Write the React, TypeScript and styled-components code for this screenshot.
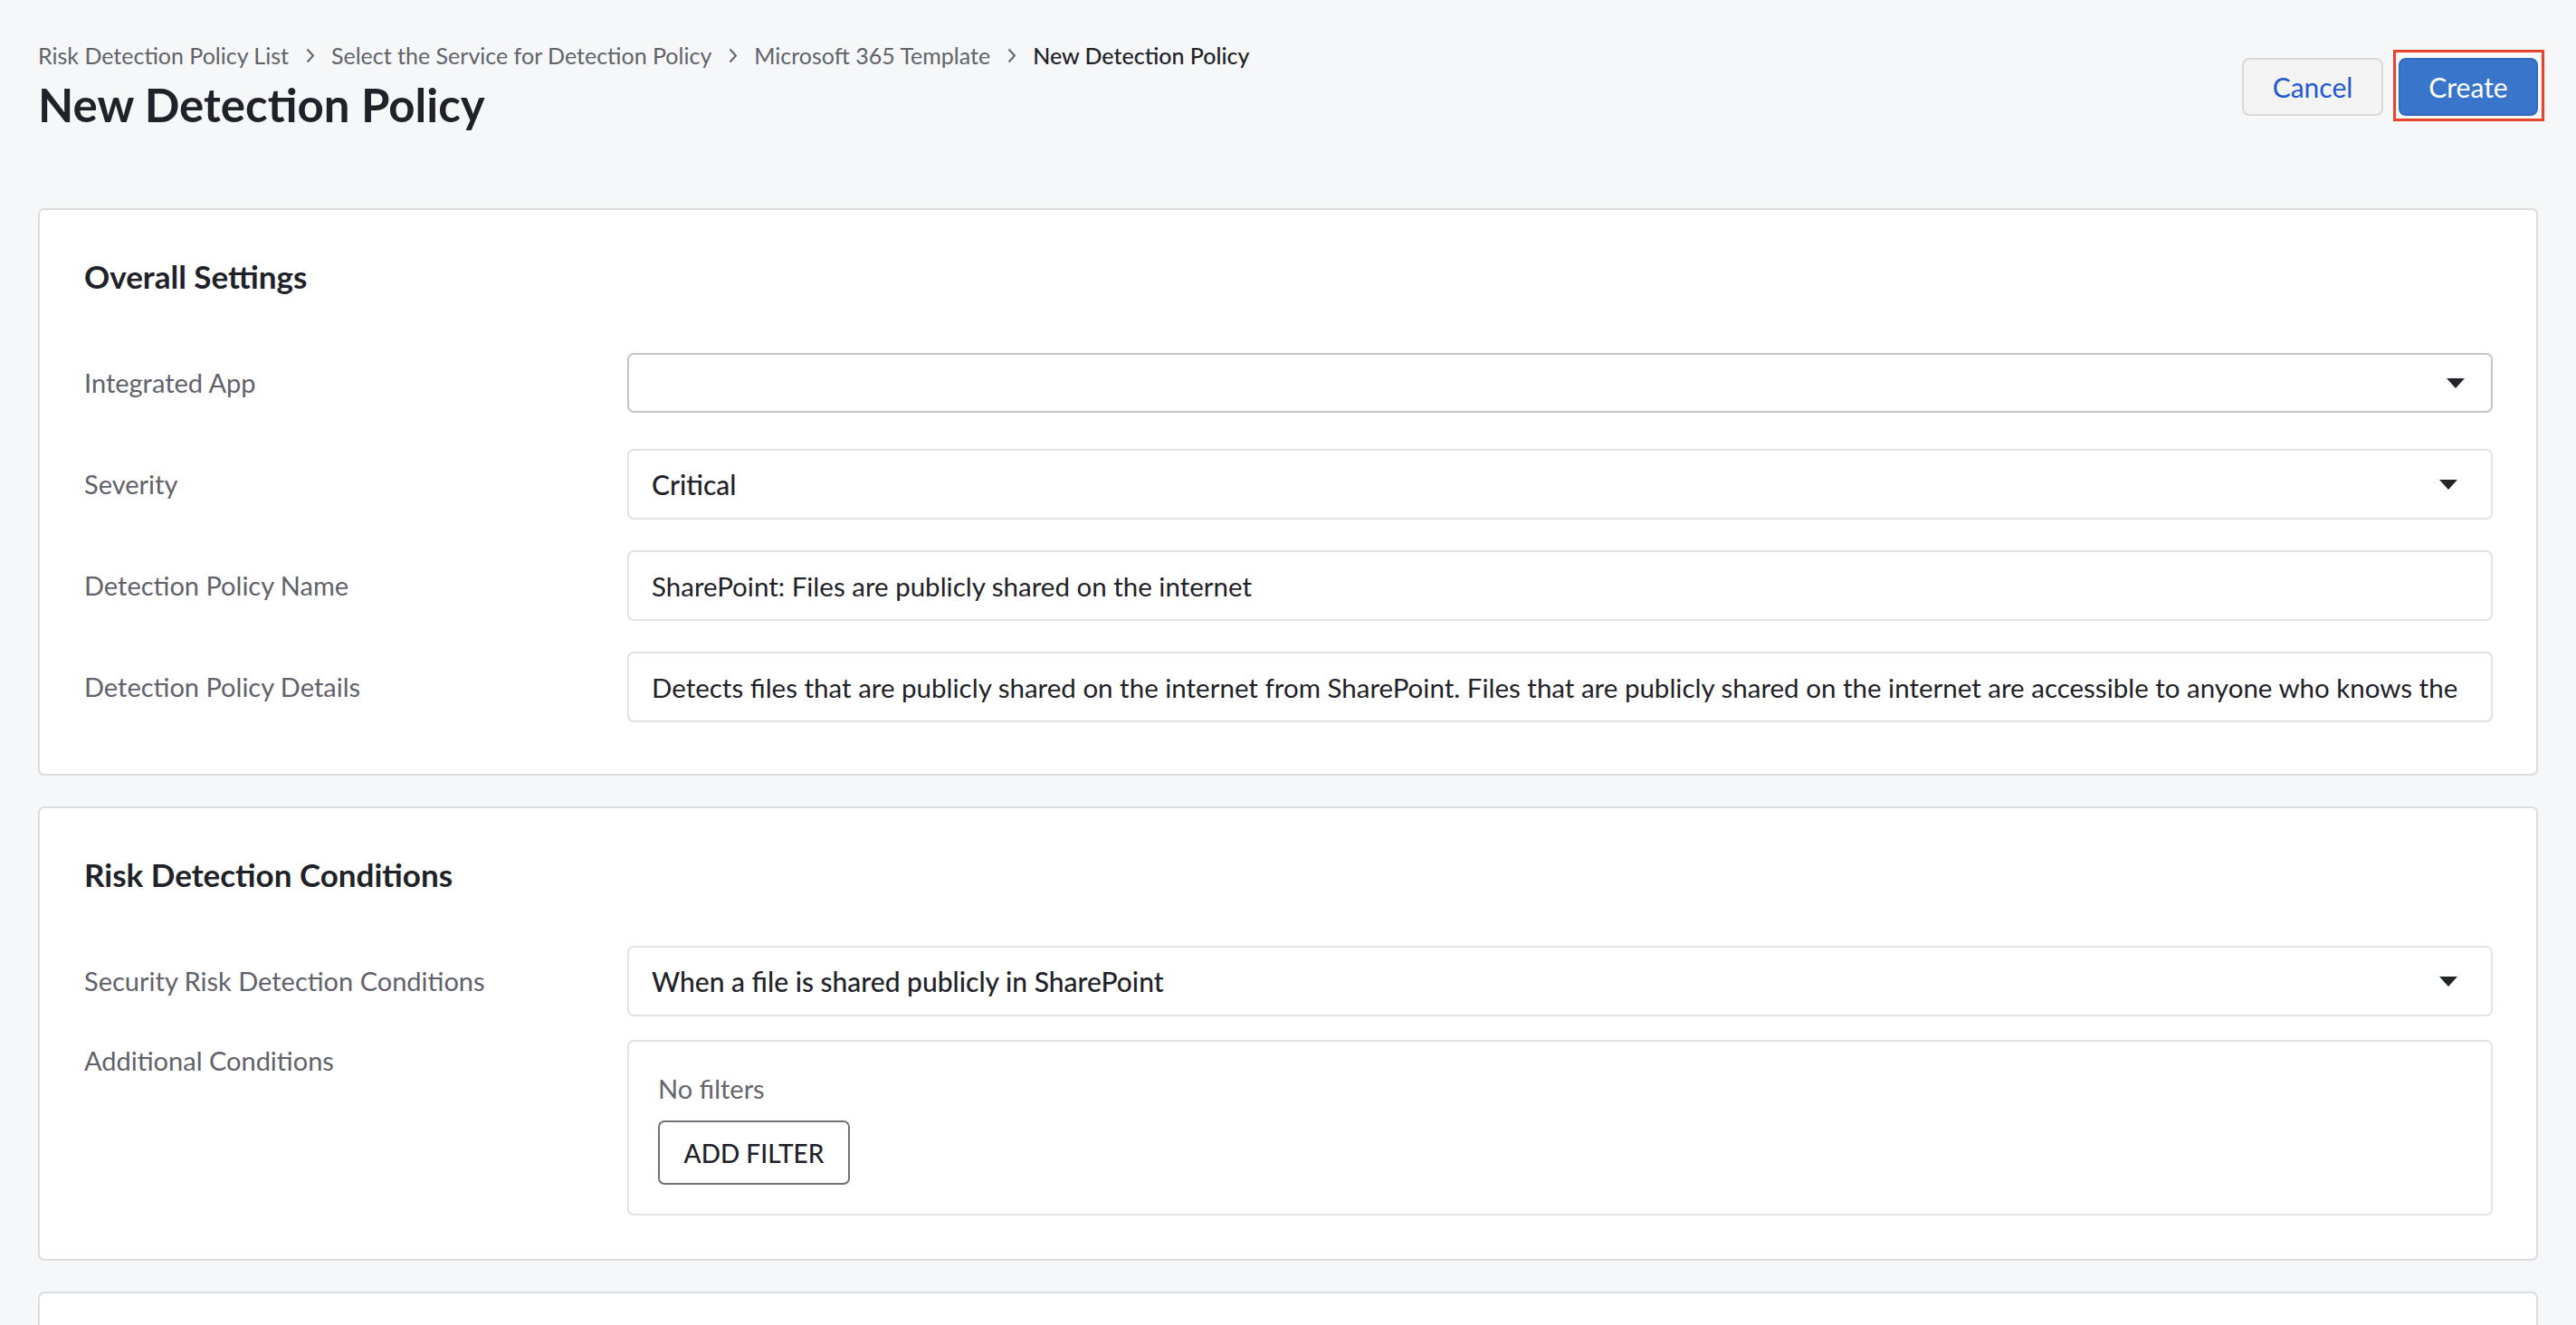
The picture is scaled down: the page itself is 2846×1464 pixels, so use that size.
import React from 'react';
import styled, { createGlobalStyle } from 'styled-components';

const GlobalStyle = createGlobalStyle`
  html, body { margin: 0; padding: 0; background: #f6f7f9; }
  body { font-family: Lato, "Noto Sans", sans-serif; color: #1f2329; }
  * { box-sizing: border-box; }
`;

const Page = styled.div`
  padding: 46px 42px 0 42px;
  min-height: 1464px;
`;

const Header = styled.header`
  display: flex;
  justify-content: space-between;
  align-items: flex-start;
  margin-bottom: 84px;
`;

const TitleBlock = styled.div`
  display: flex;
  flex-direction: column;
`;

const Breadcrumbs = styled.nav`
  display: flex;
  align-items: center;
  gap: 18px;
  font-size: 25px;
  line-height: 30px;
  color: #5f636a;
`;

const Crumb = styled.span<{ $current?: boolean }>`
  color: ${(p) => (p.$current ? '#1f2329' : '#5f636a')};
  font-weight: ${(p) => (p.$current ? 500 : 400)};
`;

const Title = styled.h1`
  margin: 10px 0 0 0;
  font-size: 51px;
  line-height: 60px;
  font-weight: 700;
  color: #1f2329;
`;

const Actions = styled.div`
  display: flex;
  gap: 17px;
  margin-top: 18px;
`;

const Button = styled.button<{ $primary?: boolean }>`
  position: relative;
  height: 64px;
  width: ${(p) => (p.$primary ? '154px' : '156px')};
  border-radius: 8px;
  font-family: Lato, "Noto Sans", sans-serif;
  font-size: 30px;
  cursor: pointer;
  border: 2px solid ${(p) => (p.$primary ? '#3069bd' : '#d8d9db')};
  background: ${(p) => (p.$primary ? '#3a75cc' : '#f3f3f4')};
  color: ${(p) => (p.$primary ? '#ffffff' : '#2458d3')};
`;

const Highlight = styled.span`
  position: absolute;
  top: -11px;
  bottom: -8px;
  left: -8px;
  right: -9px;
  border: 3px solid #e6432a;
  pointer-events: none;
`;

const Card = styled.section<{ $pad: string; $height?: string }>`
  background: #ffffff;
  border: 2px solid #d9dce1;
  border-radius: 7px;
  padding: ${(p) => p.$pad};
  margin-bottom: 34px;
  ${(p) => (p.$height ? `height: ${p.$height};` : '')}
`;

const CardTitle = styled.h2`
  margin: 0 0 58px 0;
  font-size: 35px;
  line-height: 41px;
  font-weight: 700;
  color: #1f2329;
`;

const FieldGrid = styled.div<{ $gap: number }>`
  display: grid;
  grid-template-columns: 600px 1fr;
  row-gap: ${(p) => p.$gap}px;
`;

const Label = styled.div<{ $top?: boolean }>`
  display: flex;
  align-items: ${(p) => (p.$top ? 'flex-start' : 'center')};
  padding-top: ${(p) => (p.$top ? '6px' : '0')};
  font-size: 29px;
  line-height: 34px;
  color: #5f626a;
`;

const Control = styled.div`
  display: flex;
  align-items: center;
  min-height: 78px;
`;

const SelectBox = styled.div<{ $compact?: boolean }>`
  flex: 1;
  display: flex;
  align-items: center;
  justify-content: space-between;
  height: ${(p) => (p.$compact ? '66px' : '78px')};
  border: 2px solid ${(p) => (p.$compact ? '#c4c5c8' : '#e1e2e4')};
  border-radius: 7px;
  background: #fff;
  padding: 0 ${(p) => (p.$compact ? '29px' : '37px')} 0 25px;
  font-size: 30px;
  font-weight: 500;
  color: #1f2329;
`;

const TextInput = styled.input`
  flex: 1;
  height: 78px;
  border: 2px solid #e1e2e4;
  border-radius: 7px;
  background: #fff;
  padding: 0 31px 0 25px;
  font-family: Lato, "Noto Sans", sans-serif;
  font-size: 29.5px;
  color: #1f2329;
  outline: none;
  min-width: 0;
`;

const FilterBox = styled.div`
  flex: 1;
  border: 2px solid #e1e2e4;
  border-radius: 7px;
  padding: 35px 32px 32px 32px;
  display: flex;
  flex-direction: column;
  align-items: flex-start;
  gap: 19px;
`;

const Muted = styled.div`
  font-size: 29px;
  line-height: 33px;
  color: #63666d;
`;

const OutlineButton = styled.button`
  width: 212px;
  height: 71px;
  border: 2px solid #6f727a;
  border-radius: 7px;
  background: #fff;
  font-family: Lato, "Noto Sans", sans-serif;
  font-size: 28px;
  font-weight: 500;
  color: #1f2329;
  text-transform: uppercase;
`;

const Caret = () => (
  <svg width="20" height="11" viewBox="0 0 20 11">
    <path d="M0 0 L20 0 L10 11 Z" fill="#22252a" />
  </svg>
);

const Chevron = () => (
  <svg width="11" height="17" viewBox="0 0 11 17">
    <path d="M2.5 1.5 L9 8.5 L2.5 15.5" fill="none" stroke="#5f636a" strokeWidth="2" />
  </svg>
);

export default function App() {
  return (
    <>
      <GlobalStyle />
      <Page>
        <Header>
          <TitleBlock>
            <Breadcrumbs>
              <Crumb>Risk Detection Policy List</Crumb>
              <Chevron />
              <Crumb>Select the Service for Detection Policy</Crumb>
              <Chevron />
              <Crumb>Microsoft 365 Template</Crumb>
              <Chevron />
              <Crumb $current>New Detection Policy</Crumb>
            </Breadcrumbs>
            <Title>New Detection Policy</Title>
          </TitleBlock>
          <Actions>
            <Button>Cancel</Button>
            <Button $primary>
              Create
              <Highlight />
            </Button>
          </Actions>
        </Header>

        <Card $pad="53px 48px 57px 49px">
          <CardTitle>Overall Settings</CardTitle>
          <FieldGrid $gap={34}>
            <Label>Integrated App</Label>
            <Control>
              <SelectBox $compact>
                <span />
                <Caret />
              </SelectBox>
            </Control>
            <Label>Severity</Label>
            <Control>
              <SelectBox>
                <span>Critical</span>
                <Caret />
              </SelectBox>
            </Control>
            <Label>Detection Policy Name</Label>
            <Control>
              <TextInput readOnly value="SharePoint: Files are publicly shared on the internet" />
            </Control>
            <Label>Detection Policy Details</Label>
            <Control>
              <TextInput
                readOnly
                value="Detects files that are publicly shared on the internet from SharePoint. Files that are publicly shared on the internet are accessible to anyone who knows the URL."
              />
            </Control>
          </FieldGrid>
        </Card>

        <Card $pad="53px 48px 48px 49px">
          <CardTitle>Risk Detection Conditions</CardTitle>
          <FieldGrid $gap={26}>
            <Label>Security Risk Detection Conditions</Label>
            <Control>
              <SelectBox>
                <span>When a file is shared publicly in SharePoint</span>
                <Caret />
              </SelectBox>
            </Control>
            <Label $top>Additional Conditions</Label>
            <Control>
              <FilterBox>
                <Muted>No filters</Muted>
                <OutlineButton>Add Filter</OutlineButton>
              </FilterBox>
            </Control>
          </FieldGrid>
        </Card>

        <Card $pad="53px 48px 48px 49px" $height="240px" />
      </Page>
    </>
  );
}
